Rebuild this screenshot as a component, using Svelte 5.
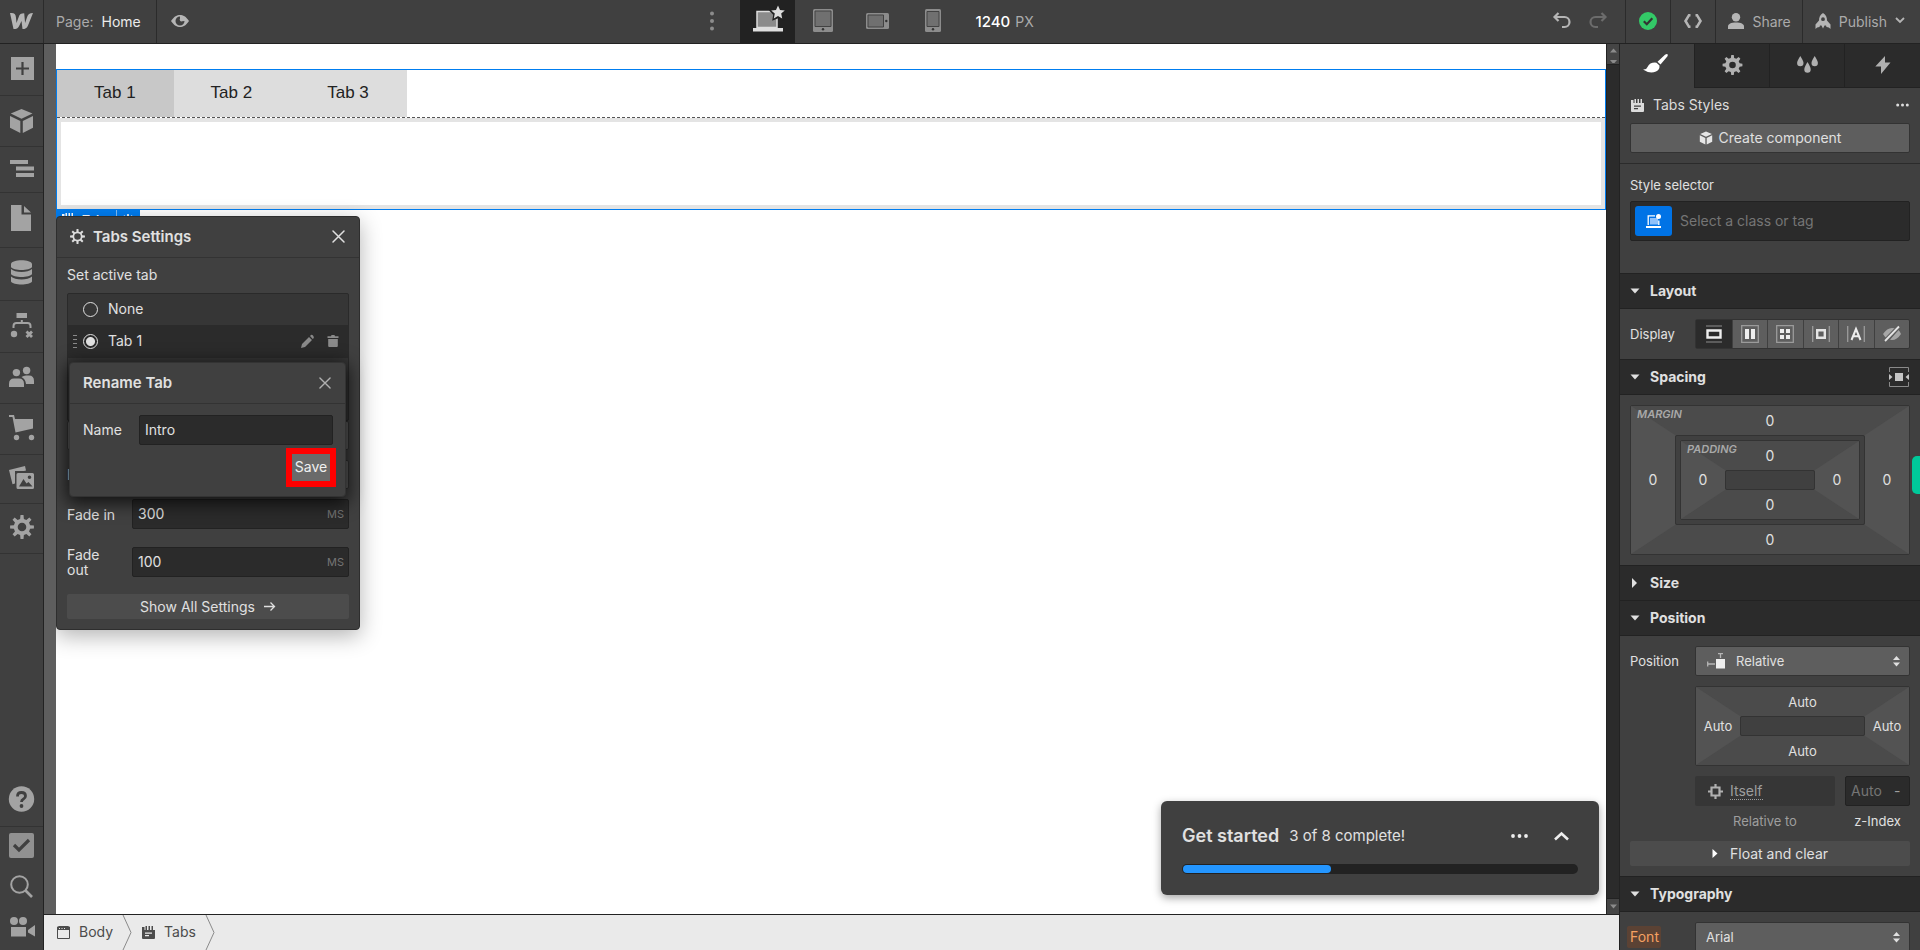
<script>
  // Outline of a cog wheel with a round hole, for use with fill-rule evenodd
  function gear(c, outer, inner, hole, teeth = 8) {
    const step = (Math.PI * 2) / teeth;
    const pts = [];
    for (let i = 0; i < teeth; i++) {
      const a = i * step - Math.PI / 2;
      for (const [offset, r] of [[-0.29, inner], [-0.16, outer], [0.16, outer], [0.29, inner]]) {
        const t = a + offset * step;
        pts.push((c + r * Math.cos(t)).toFixed(2) + ' ' + (c + r * Math.sin(t)).toFixed(2));
      }
    }
    return `M${pts.join('L')}ZM${c - hole} ${c}a${hole} ${hole} 0 1 0 ${hole * 2} 0a${hole} ${hole} 0 1 0 ${-hole * 2} 0Z`;
  }

  const tools = [
    { label: 'Add elements', icon: 'add', h: 24 },
    { label: 'Components', icon: 'cube', h: 23 },
    { label: 'Navigator', icon: 'nav', h: 18 },
    { label: 'Pages', icon: 'page', h: 27 },
    { label: 'CMS collections', icon: 'db', h: 25 },
    { label: 'Logic', icon: 'logic', h: 24 },
    { label: 'Users', icon: 'users', h: 23 },
    { label: 'Ecommerce', icon: 'cart', h: 23 },
    { label: 'Assets', icon: 'assets', h: 21 },
    { label: 'Settings', icon: 'gear', h: 22 }
  ];
  const displays = ['Block', 'Flex', 'Grid', 'Inline-block', 'Inline', 'None'];

  let activeTab = $state('tab1');
  let tabName = $state('Intro');
  let fadeIn = $state('300');
  let fadeOut = $state('100');
  let display = $state('Block');
  const done = 3;
  const total = 8;
</script>

{#snippet tabsIcon()}
  <svg width="13" height="13" viewBox="0 0 13 13"><path fill="currentColor" fill-rule="evenodd" d="M0 1h2.500v3h1V0H5v4h1.500V0H8v4h1.500V0H11v4h2v8q0 1-1 1H1q-1 0-1-1zM3 6.500v1.200h7V6.500zM3 9v1.200h4V9z" /></svg>
{/snippet}

{#snippet cube()}
  <path d="M12.500 1 23.500 5.600 12.500 10.800 1.800 5.600zM1 8l10.300 5v12L1 19.800zM24 8l-10.200 5v12L24 19.800z" />
{/snippet}

{#snippet cross(size)}
  <svg width={size} height={size} viewBox="0 0 13 13"><path d="M1 1 12 12M12 1 1 12" fill="none" stroke="currentColor" stroke-width="1.500" stroke-linecap="round" /></svg>
{/snippet}

{#snippet updown()}
  <svg class="updown" width="7" height="11" viewBox="0 0 7 11"><path fill="currentColor" d="M3.500 0 7 4H0zM0 6.500h7l-3.500 4z" /></svg>
{/snippet}

{#snippet section(title, open)}
  <button class="section" class:open aria-expanded={open}>
    <svg width="10" height="10" viewBox="0 0 10 10"><path fill="currentColor" d={open ? 'M.5 2.500h9L5 7.500z' : 'M2 0v10l5-5z'} /></svg>
    <span>{title}</span>
    {#if title === 'Spacing'}
      <svg class="end" width="20" height="20" viewBox="0 0 20 20"><path d="M.5 5V.5h19V5M.5 15v4.500h19V15" fill="none" stroke="#8a8a8a" /><path fill="#c4c4c4" d="M6 6h8v8H6zM0 7l3.500 3L0 13zM20 7l-3.500 3 3.500 3z" /></svg>
    {/if}
  </button>
{/snippet}

<div class="app">
  <header class="topbar">
    <button class="logo" aria-label="Menu">
      <svg width="23" height="16" viewBox="0 0 23 16"><path fill="#b5b5b5" d="M0 0h1.500C4.500 0 5.600 1.600 5.900 4l.6 6 2.300-6.200C9.400 1.300 11 .3 14.200.3l.9 9.700 2-6C18 1.200 19.500 0 23 0l-5 12.400C17 15 15.200 16 12.500 16l-1-8L9 13.200C8 15.300 6.500 16 3.500 16z" /></svg>
    </button>
    <button class="page"><span>Page:</span> Home</button>
    <button class="plain eye" aria-label="Preview">
      <svg width="18" height="12" viewBox="0 0 18 12"><path fill="#b5b5b5" fill-rule="evenodd" d="M0 6C3 1.500 6 0 9 0s6 1.500 9 6c-3 4.500-6 6-9 6S3 10.500 0 6zM9 1.500A4.500 4.500 0 1 0 13.500 6L11 6.300A1.800 1.800 0 0 1 9 3.600z" /></svg>
    </button>
    <div class="devices">
      <button class="plain dots" aria-label="Breakpoint options">
        <svg width="4" height="20" viewBox="0 0 4 20"><g fill="#8c8c8c"><circle cx="2" cy="2.500" r="2" /><circle cx="2" cy="10" r="2" /><circle cx="2" cy="17.500" r="2" /></g></svg>
      </button>
      <button class="plain device on" aria-label="Desktop">
        <svg width="32" height="28" viewBox="0 0 32 28"><path fill="#8b8b8b" stroke="#dedede" stroke-width="1.500" d="M5 6.500h20v16H5z" /><path fill="#dedede" d="M1 23h30v3.500H1z" /><path fill="#222" d="m26-1 3.200 5.200 6 1-4 4.500 1 6-6-2.400-6 2.400 1-6-4.400-4.500 6.200-1z" /><path fill="#dedede" d="m26 .5 2 4.400 4.800.5-3.600 3.200 1 4.900-4.200-2.400-4.200 2.400 1-4.900-3.600-3.200 4.800-.5z" /></svg>
      </button>
      <button class="plain device" aria-label="Tablet">
        <svg width="20" height="23" viewBox="0 0 20 23"><rect width="20" height="23" rx="1.500" fill="#8c8c8c" /><path fill="#707070" stroke="#424242" d="M2 2h16v15.500H2z" /><circle cx="10" cy="20.300" r="1.200" fill="#333" /></svg>
      </button>
      <button class="plain device" aria-label="Mobile landscape">
        <svg width="23" height="16" viewBox="0 0 23 16"><rect width="23" height="16" rx="1.500" fill="#8c8c8c" /><path fill="#707070" stroke="#424242" d="M2 2h15.500v12H2z" /><circle cx="20.300" cy="8" r="1.200" fill="#333" /></svg>
      </button>
      <button class="plain device" aria-label="Mobile portrait">
        <svg width="16" height="23" viewBox="0 0 16 23"><rect width="16" height="23" rx="1.500" fill="#8c8c8c" /><path fill="#707070" stroke="#424242" d="M2 2.500h12v15H2z" /><circle cx="8" cy="20.300" r="1.200" fill="#333" /></svg>
      </button>
      <button class="width"><b>1240</b> PX</button>
    </div>
    <div class="history">
      <button class="plain" aria-label="Undo">
        <svg width="18" height="17" viewBox="0 0 18 17"><path d="M5.500 1 1.500 5l4 4M2 5h9.500a4.800 4.800 0 0 1 0 10H9" fill="none" stroke="#b5b5b5" stroke-width="2.200" /></svg>
      </button>
      <button class="plain" aria-label="Redo" disabled>
        <svg width="18" height="17" viewBox="0 0 18 17"><path d="m12.500 1 4 4-4 4M16 5H6.500a4.800 4.800 0 0 0 0 10H9" fill="none" stroke="#6c6c6c" stroke-width="2.200" /></svg>
      </button>
    </div>
    <button class="action status" aria-label="All changes saved">
      <svg width="18" height="18" viewBox="0 0 18 18"><circle cx="9" cy="9" r="9" fill="#33c967" /><path d="m4.800 9.200 3 3 5.500-6" fill="none" stroke="#333" stroke-width="2.200" /></svg>
    </button>
    <button class="action" aria-label="Export code">
      <svg width="18" height="14" viewBox="0 0 18 14"><path d="M6.500 1.200H5L1.500 7 5 12.800h1.500M11.500 1.200H13L16.500 7 13 12.800h-1.500" fill="none" stroke="#b5b5b5" stroke-width="2.600" /></svg>
    </button>
    <button class="action">
      <svg width="16" height="16" viewBox="0 0 16 16"><circle cx="8" cy="4.300" r="4.200" fill="#b5b5b5" /><path fill="#b5b5b5" d="M0 16v-2.500C0 11 3 9.500 8 9.500s8 1.500 8 4V16z" /></svg>
      Share
    </button>
    <button class="action publish">
      <svg width="16" height="16" viewBox="0 0 16 16"><path fill="#b5b5b5" fill-rule="evenodd" d="M8 0c3 1.800 4 4.500 4 7.500l3.500 4V16c-1-1.300-2.200-2-4-2l-.5-1.500H9.500L8 15.500 6.500 12.500H5L4.500 14c-1.800 0-3 .7-4 2v-4.500l3.500-4C4 4.500 5 1.800 8 0zm0 4.300a1.900 1.900 0 1 0 0 3.800 1.900 1.900 0 0 0 0-3.800z" /></svg>
      Publish
      <svg class="caret" width="10" height="7" viewBox="0 0 10 7"><path d="m1 1 4 4 4-4" fill="none" stroke="#b5b5b5" stroke-width="1.800" /></svg>
    </button>
  </header>

  <nav class="sidebar" aria-label="Tools">
    {#each tools as tool}
      <button class="tool" aria-label={tool.label}>
        <svg width="26" height={tool.h} viewBox="0 0 26 {tool.h}" fill="#a3a3a3">
          {#if tool.icon === 'add'}
            <path fill-rule="evenodd" d="M2 1h23v23H2zM12.400 6v5.400H7v2.200h5.400V19h2.200v-5.400H20v-2.200h-5.400V6z" />
          {:else if tool.icon === 'cube'}
            {@render cube()}
          {:else if tool.icon === 'nav'}
            <path d="M1 1h18v4H1zM7 7.500h18v4H7zM7 14h18v4H7z" />
          {:else if tool.icon === 'page'}
            <path d="M2 0h10.500v9.500H22V26H2zM15 1v6.500h7z" />
          {:else if tool.icon === 'db'}
            <path d="M2 4c1-5 20-5 21 0v3c-2 4-19 4-21 0zM2 9c4 4 17 4 21 0v5c-2 4-19 4-21 0zM2 16.500c4 4 17 4 21 0v5c-2 4-19 4-21 0z" />
          {:else if tool.icon === 'logic'}
            <path d="M7.500 0H18v5H7.500z" /><circle cx="5" cy="21" r="3.200" />
            <path d="M4.500 15v-2q0-3 3-3h11q3 0 3 3v2M12.800 7v3" fill="none" stroke="#a3a3a3" stroke-width="2" />
            <path d="m17.500 18.500 5.500 5.500M23 18.500 17.500 24" stroke="#a3a3a3" stroke-width="2.800" />
          {:else if tool.icon === 'users'}
            <circle cx="7.400" cy="7.600" r="3.700" /><circle cx="17.600" cy="5.500" r="3.700" />
            <path d="M0 22v-3q0-5.500 5-5.500h5q5 0 5 5.500v3zM12.500 12q2-1.500 4.500-1.500h3q5 0 5 5.500v3h-8q-.5-5-4.500-7z" />
          {:else if tool.icon === 'cart'}
            <path d="M0-1h5l1 4h18v9.500L6.500 16.500l-3-15.500H0z" /><circle cx="7.500" cy="21.500" r="2.700" /><circle cx="22.500" cy="21.500" r="2.700" />
          {:else if tool.icon === 'assets'}
            <path d="M0 3 16-1l1 4.500-2 .5H6v12.500l-2.500.8z" />
            <path fill-rule="evenodd" d="M9 6h14.500q1.500 0 1.500 1.500v13q0 1.500-1.500 1.500H9q-1.500 0-1.500-1.500v-13Q7.500 6 9 6zM10 19.500h13.500L19.500 15l-2 1.500-3-4.500zM20.500 8.500a1.800 1.800 0 1 0 0 3.600 1.800 1.800 0 0 0 0-3.600z" />
          {:else}
            <path fill-rule="evenodd" transform="translate(1 -1)" d={gear(12, 12, 8.300, 4.300)} />
          {/if}
        </svg>
      </button>
    {/each}
    <button class="tool help" aria-label="Help">
      <svg width="26" height="24" viewBox="0 0 26 24"><circle cx="12.500" cy="12" r="12.700" fill="#a3a3a3" /><path d="M8.500 9.500q0-4 4-4t4 3.500q0 2-2 3t-2 3" fill="none" stroke="#404040" stroke-width="2.800" /><circle cx="12.500" cy="19" r="1.900" fill="#404040" /></svg>
    </button>
    <button class="small" aria-label="Audit">
      <svg width="25" height="25" viewBox="0 0 25 25"><rect width="25" height="25" rx="2" fill="#919191" /><path d="m5 12 5 5L20 7" fill="none" stroke="#404040" stroke-width="3.200" /></svg>
    </button>
    <button class="small" aria-label="Search">
      <svg width="23" height="23" viewBox="0 0 23 23"><circle cx="9.500" cy="9.500" r="8.300" fill="none" stroke="#a3a3a3" stroke-width="2" /><path d="m15.500 15.500 6.500 6.500" stroke="#a3a3a3" stroke-width="2.600" /></svg>
    </button>
    <button class="small" aria-label="Video tutorials">
      <svg width="25" height="20" viewBox="0 0 25 20" fill="#a3a3a3"><circle cx="5" cy="4" r="4" /><circle cx="14" cy="4" r="4" /><path d="M2 10h15v9.500H2zM19 13l7-5v11.500l-7-4z" /></svg>
    </button>
  </nav>

  <main class="stage">
    <div class="canvas">
      <div class="tabs-block">
        <div class="tab-menu">
          <a class="current" href="#tab-1">Tab 1</a>
          <a href="#tab-2">Tab 2</a>
          <a href="#tab-3">Tab 3</a>
        </div>
        <div class="tab-content"></div>
      </div>

      <div class="tag">{@render tabsIcon()}<span>Tabs</span><i></i><svg width="12" height="12" viewBox="0 0 12 12"><path fill="#fff" fill-rule="evenodd" d={gear(6, 6, 4.200, 2)} /></svg></div>

      <section class="dialog settings">
        <header>
          <svg width="15" height="15" viewBox="0 0 15 15"><path fill="#dcdcdc" fill-rule="evenodd" d={gear(7.500, 7.500, 5, 3.300)} /></svg>
          <h2>Tabs Settings</h2>
          <button class="plain" aria-label="Close settings">{@render cross(13)}</button>
        </header>
        <div class="body">
          <p>Set active tab</p>
          <div class="choices">
            <label><span class="grip"></span><input type="radio" name="tab" value="none" bind:group={activeTab} />None</label>
            <label class="row-on">
              <span class="grip shown"></span>
              <input type="radio" name="tab" value="tab1" bind:group={activeTab} />Tab 1
              <svg class="edit" width="13" height="13" viewBox="0 0 13 13"><path fill="#8a8a8a" d="M0 13l1-4 7-7 3 3-7 7zM9 1l1-1q1-.5 2 .5T12.800 3l-1 1z" /></svg>
              <svg width="12" height="12" viewBox="0 0 12 12"><path fill="#8a8a8a" d="M.5 1.200h3.500L4.500 0h3L8 1.200h3.500V3H.5zM1.200 4h9.600v7q0 1-1 1H2.200q-1 0-1-1z" /></svg>
            </label>
            <div class="choice-rest"></div>
          </div>
          <button class="field add-tab" aria-label="Add tab"></button>
          <div class="field-row"><label for="easing">E</label><button id="easing" class="field" aria-label="Easing"></button></div>
          <div class="field-row">
            <label for="fade-in">Fade in</label>
            <div class="input"><input id="fade-in" bind:value={fadeIn} /><span>MS</span></div>
          </div>
          <div class="field-row tall">
            <label for="fade-out">Fade out</label>
            <div class="input"><input id="fade-out" bind:value={fadeOut} /><span>MS</span></div>
          </div>
          <button class="wide">Show All Settings
            <svg width="12" height="11" viewBox="0 0 12 11"><path d="M0 5.500h10M6.500 1.500l4 4-4 4" fill="none" stroke="currentColor" stroke-width="1.300" /></svg>
          </button>
        </div>
      </section>

      <section class="dialog rename">
        <header>
          <h2>Rename Tab</h2>
          <button class="plain" aria-label="Close rename">{@render cross(12)}</button>
        </header>
        <div class="rename-row">
          <label for="tab-name">Name</label>
          <input id="tab-name" bind:value={tabName} />
        </div>
        <button class="save">Save</button>
      </section>

      <aside class="started">
        <div class="started-head">
          <h2>Get started</h2>
          <span>{done} of {total} complete!</span>
          <button class="plain" aria-label="More"><svg width="17" height="4" viewBox="0 0 17 4"><g fill="#eee"><circle cx="2" cy="2" r="1.900" /><circle cx="8.500" cy="2" r="1.900" /><circle cx="15" cy="2" r="1.900" /></g></svg></button>
          <button class="plain" aria-label="Expand"><svg width="15" height="10" viewBox="0 0 15 10"><path d="m1 8.500 6.500-6 6.500 6" fill="none" stroke="#eee" stroke-width="2.600" /></svg></button>
        </div>
        <div class="bar"><div style="width: {(done / total) * 100}%"></div></div>
      </aside>
    </div>
    <div class="scroll">
      <div class="arrows"><svg width="7" height="5" viewBox="0 0 7 5"><path fill="#8b8b8b" d="M0 4.500h7L3.500.5z" /></svg><svg width="7" height="4" viewBox="0 0 7 4"><path fill="#8b8b8b" d="M0 0h7L4.500 3h-2z" /></svg></div>
      <div class="arrows down"><svg width="7" height="5" viewBox="0 0 7 5"><path fill="#8b8b8b" d="M0 .5h7L3.500 4.500z" /></svg></div>
    </div>
    <footer class="crumbs">
      <a href="#body"><svg width="13" height="13" viewBox="0 0 13 13"><path fill="none" stroke="#4c4c4c" d="M.5 1.500q0-1 1-1h10q1 0 1 1v11H.5z" /><path fill="#4c4c4c" d="M0 1h13v3H0z" /><path fill="#eaeaea" d="M2 2h1v1H2zM4.500 2h1v1h-1zM7 2h1v1H7z" /></svg>Body</a>
      <svg class="sep" width="10" height="35" viewBox="0 0 10 35"><path d="M1 0 9 17.500 1 35" fill="none" stroke="#8a8a8a" /></svg>
      <a href="#tabs">{@render tabsIcon()}Tabs</a>
      <svg class="sep" width="10" height="35" viewBox="0 0 10 35"><path d="M1 0 9 17.500 1 35" fill="none" stroke="#8a8a8a" /></svg>
    </footer>
  </main>

  <aside class="panel">
    <div class="panel-tabs">
      <button class="on" aria-label="Style"><svg width="25" height="19" viewBox="0 0 25 19" fill="#fff"><path d="M24 0q1.500.5.5 2.200l-7 8.300-3-2.800 7.500-7Q23 0 24 0zM13.500 8.700l3 2.800q.3 4.500-3.500 6-6.500 2.500-13-2 3.500.3 4.500-2.500 2.500-5 9-4.300z" /></svg></button>
      <button aria-label="Element settings"><svg width="21" height="20" viewBox="0 0 20 20"><path fill="#b0b0b0" fill-rule="evenodd" d={gear(10, 10, 7.300, 3.300)} /></svg></button>
      <button aria-label="Style manager"><svg width="21" height="17" viewBox="0 0 21 17" fill="#b0b0b0"><path d="M3.300 0q3.200 5 3.200 7a3.200 3.200 0 0 1-6.400 0q0-2 3.200-7zM10.500 6q3.200 5 3.200 7.500a3.200 3.200 0 0 1-6.400 0q0-2.500 3.200-7.500zM17.700 0q3.200 5 3.200 7a3.200 3.200 0 0 1-6.400 0q0-2 3.200-7z" /></svg></button>
      <button aria-label="Interactions"><svg width="16" height="18" viewBox="0 0 16 18"><path fill="#b0b0b0" d="M10 0v6.500h5.500L6 18v-7.500H.3z" /></svg></button>
    </div>
    <div class="intro">
      <div class="styles-head">
        {@render tabsIcon()}<h2>Tabs Styles</h2>
        <button class="plain" aria-label="More options"><svg width="13" height="4" viewBox="0 0 13 4"><g fill="#ddd"><circle cx="1.700" cy="2" r="1.500" /><circle cx="6.500" cy="2" r="1.500" /><circle cx="11.300" cy="2" r="1.500" /></g></svg></button>
      </div>
      <button class="create"><svg width="14" height="14" viewBox="0 0 25 26" fill="#e6e6e6">{@render cube()}</svg>Create component</button>
    </div>
    <div class="selector">
      <label for="selector">Style selector</label>
      <div class="selector-box">
        <button class="state" aria-label="Inheritance"><svg width="16" height="15" viewBox="0 0 16 15"><path fill="#8fc1fa" d="M4 4h8v6.500H4z" /><path d="M9 1.800H2.200V11M12.800 6.500V11" fill="none" stroke="#fff" stroke-width="1.300" /><path fill="#fff" d="M0 12h15v2H0z" /><circle cx="12.500" cy="2.500" r="2.500" fill="#fff" /></svg></button>
        <input id="selector" placeholder="Select a class or tag" />
      </div>
    </div>

    {@render section('Layout', true)}
    <div class="group row">
      <span class="label">Display</span>
      <div class="segments">
        {#each displays as d, i}
          <button class:picked={display === d} aria-label={d} aria-pressed={display === d} onclick={() => (display = d)}>
            <svg width="18" height="18" viewBox="0 0 18 18">
              {#if i === 0}<path d="M1 1h16M1 17h16" stroke="#8d8d8d" stroke-width="1.200" /><path d="M2.500 5.500h13v7h-13z" fill="none" stroke="#eee" stroke-width="2.400" />
              {:else if i === 1}<path d="M.7.7h16.600v16.600H.7z" fill="none" stroke="#9b9b9b" stroke-width="1.300" /><path fill="#eee" d="M4 4h4v10H4zM10 4h4v10h-4z" />
              {:else if i === 2}<path d="M.7.7h16.600v16.600H.7z" fill="none" stroke="#9b9b9b" stroke-width="1.300" /><path fill="#eee" d="M4 4h4v4H4zM10 4h4v4h-4zM4 10h4v4H4zM10 10h4v4h-4z" />
              {:else if i === 3}<path d="M.7 1v16M17.300 1v16" stroke="#9b9b9b" stroke-width="1.300" /><path d="M5.200 5.200h7.600v7.600H5.200z" fill="none" stroke="#e4e4e4" stroke-width="2.400" />
              {:else if i === 4}<path d="M.7 1v16M17.300 1v16" stroke="#9b9b9b" stroke-width="1.300" /><path d="M4.500 15 9 4l4.500 11M6 11.300h6" fill="none" stroke="#eee" stroke-width="2" />
              {:else}<path fill="#a6a6a6" d="M0 9q4-6 9-6 2.500 0 4 1L4.500 14Q2 12.500 0 9zM18 9q-4 6-9 6l-2-.3L15.500 5Q17 6.500 18 9z" /><path d="M2 16 16 1.500" stroke="#5e5e5e" stroke-width="4" /><path d="M2 16 16 1.500" stroke="#e4e4e4" stroke-width="1.800" />{/if}
            </svg>
          </button>
        {/each}
      </div>
    </div>

    {@render section('Spacing', true)}
    <div class="group">
      <div class="box margin">
        <button class="l">0</button><button class="r">0</button>
        <button class="t">0</button><button class="b">0</button>
        <span class="name">MARGIN</span>
        <div class="core">
          <div class="box padding">
            <button class="l">0</button><button class="r">0</button>
            <button class="t">0</button><button class="b">0</button>
            <span class="name">PADDING</span>
            <div class="core"></div>
          </div>
        </div>
      </div>
    </div>

    {@render section('Size', false)}
    {@render section('Position', true)}
    <div class="group">
      <div class="row">
        <label class="label" for="position">Position</label>
        <div class="select with-icon">
          <select id="position"><option>Relative</option></select>
          <svg class="lead" width="18" height="16" viewBox="0 0 18 16"><path d="M11 .7h5M13.500 1v4M.7 8.500v5M1 11h7" fill="none" stroke="#b5b5b5" stroke-width="1.300" /><path fill="#eee" d="M9 6h9v9.500H9z" /></svg>
          {@render updown()}
        </div>
      </div>
      <div class="row indent">
        <div class="box offsets">
          <button class="l">Auto</button><button class="r">Auto</button>
          <button class="t">Auto</button><button class="b">Auto</button>
          <div class="core"></div>
        </div>
      </div>
      <div class="row indent pair">
        <div class="rel">
          <button><svg width="15" height="15" viewBox="0 0 15 15"><path d="M3.500 3.500h8v8h-8zM7.500 0v3M7.500 12v3M0 7.500h3M12 7.500h3" fill="none" stroke="#b0b0b0" stroke-width="2.200" /></svg><u>Itself</u></button>
          <span>Relative to</span>
        </div>
        <div class="zindex">
          <div><input id="z" placeholder="Auto" /><span>-</span></div>
          <label for="z">z-Index</label>
        </div>
      </div>
      <button class="wide float"><svg width="6" height="9" viewBox="0 0 6 9"><path fill="#fff" d="M.5 0v9l5-4.500z" /></svg>Float and clear</button>
    </div>

    {@render section('Typography', true)}
    <div class="group">
      <div class="row">
        <label class="label font" for="font"><span>Font</span></label>
        <div class="select"><select id="font"><option>Arial</option></select>{@render updown()}</div>
      </div>
    </div>
    <button class="feedback" aria-label="Feedback"></button>
  </aside>
</div>

<style>
  :global(body) { margin: 0; overflow: hidden; }
  .app, .app * { box-sizing: border-box; }
  .app {
    display: grid;
    grid-template: 44px minmax(0, 1fr) / 44px minmax(0, 1fr) 301px;
    height: 100vh;
    background: #404040;
    color: #e0e0e0;
    font: 14px/16px Inter, sans-serif;
  }
  button, input, select { font: inherit; color: inherit; margin: 0; }
  button { border: 0; padding: 0; background: none; cursor: pointer; }
  h2, p { margin: 0; font: inherit; }
  a { color: inherit; text-decoration: none; }
  svg { display: block; flex: none; overflow: visible; }
  .plain { display: grid; place-items: center; }

  .topbar { grid-column: 1 / -1; display: flex; border-bottom: 1px solid #222; color: #ababab; }
  .logo { display: grid; place-items: center; width: 44px; padding: 0 0 2px; border-right: 1px solid #2b2b2b; }
  .page { padding: 0 15px 0 12px; border-right: 1px solid #2b2b2b; color: #ebebeb; }
  .page span { color: #ababab; margin-right: 4px; }
  .eye { padding: 0 14px 2px 14px; }
  .devices { flex: 1; display: flex; justify-content: center; padding-right: 16px; }
  .dots { width: 56px; padding-bottom: 2px; }
  .device { width: 55px; padding-bottom: 2px; }
  .device.on { background: #222; padding-bottom: 6px; }
  .width { padding: 0 8px 0 15px; }
  .width b { font-size: 15px; font-weight: 500; color: #fff; margin-right: 1px; }
  .history { display: flex; gap: 18px; padding: 0 18px 2px 14px; }
  .action { display: flex; align-items: center; gap: 8px; padding: 0 11px 0 12px; border-left: 1px solid #2b2b2b; }
  .action:not(:has(+ .publish)):not(.publish) { padding: 0 13px; }
  .status svg, .action svg { margin-bottom: 2px; }
  .publish { padding-right: 15px; }

  .sidebar { display: flex; flex-direction: column; border-right: 1px solid #222; }
  .tool { display: flex; padding: 12px 0 15px 9px; border-bottom: 1px solid #333; }
  .help { margin-top: auto; }
  .small { display: grid; place-items: center; height: 41px; padding-bottom: 5px; }

  .stage { display: grid; grid-template: minmax(0, 1fr) 36px / minmax(0, 1fr) 13px; }
  .canvas { position: relative; padding-top: 25px; border-left: 12px solid #5e5e5e; background: #fff; overflow: hidden; }
  .tabs-block { border: 1px solid #007df0; }
  .tab-menu { display: flex; border-bottom: 1px dashed #555; font: 17px/24px "Liberation Sans", Arial, sans-serif; color: #222; }
  .tab-menu a { padding: 11px 38px 12px 37px; background: #ddd; }
  .tab-menu .current { background: #c8c8c8; }
  .tab-content { height: 91px; border: 4px solid #e4e4e4; }
  .tag { display: flex; align-items: center; width: 84px; height: 19px; padding: 0 6px; background: #007df0; color: #fff; font-size: 12px; font-weight: 600; }
  .tag span { flex: 1; padding-left: 7px; }
  .tag i { width: 1px; height: 19px; margin-right: 5px; background: #80bef7; }

  .dialog { position: absolute; background: #404040; border: 1px solid #2e2e2e; border-radius: 4px; }
  .dialog header { display: flex; align-items: center; height: 41px; padding: 0 14px 1px 13px; border-bottom: 1px solid #333; }
  .dialog h2 { flex: 1; font-size: 15px; font-weight: 600; }
  .settings { top: 172px; left: 0; width: 304px; box-shadow: 0 6px 22px rgba(0, 0, 0, .3); }
  .settings header { gap: 8px; }
  .body { padding: 9px 10px 10px; }
  .choices { margin-top: 10px; border: 1px solid #2a2a2a; border-radius: 2px; background: #363636; }
  .choices label { display: flex; align-items: center; height: 31px; padding: 0 9px 1px 0; }
  .choices .row-on { height: 33px; background: #2b2b2b; }
  .grip { width: 4px; height: 13px; margin: 0 6px 0 5px; }
  .shown { background: repeating-linear-gradient(#8a8a8a 0 1px, transparent 1px 4px); }
  .choices input { appearance: none; width: 15px; height: 15px; margin: 0 10px 0 0; border: 1px solid #e0e0e0; border-radius: 50%; }
  .choices input:checked { background: radial-gradient(#e0e0e0 0 4px, transparent 5px); }
  .edit { margin: 0 13px 0 auto; }
  .choice-rest { height: 62px; }
  .field { width: 100%; height: 29px; background: #5e5e5e; border: 1px solid #333; border-radius: 2px; }
  .add-tab { display: block; }
  .field-row { display: grid; grid-template-columns: 50px minmax(0, 1fr); column-gap: 15px; align-items: center; margin-top: 10px; }
  .field-row label { line-height: 15px; }
  .field-row + .field-row.tall { margin-top: 18px; }
  .input { display: flex; align-items: center; height: 30px; border: 1px solid #222; border-radius: 2px; background: #2b2b2b; }
  .input input { flex: 1; min-width: 0; border: 0; padding: 0 5px; background: none; outline: 0; }
  .input span { padding-right: 4px; color: #757575; font-size: 11px; }
  .wide { display: flex; justify-content: center; align-items: center; gap: 9px; width: 100%; height: 25px; border-radius: 2px; background: #4c4c4c; }
  .body .wide { margin-top: 17px; }

  .rename { top: 318px; left: 13px; width: 277px; border-color: #333; padding-bottom: 9px; box-shadow: 0 4px 18px 2px rgba(0, 0, 0, .75); }
  .rename header button { color: #b0b0b0; }
  .rename-row { display: flex; align-items: center; justify-content: space-between; padding: 11px 12px 3px 13px; }
  .rename-row input { width: 194px; height: 30px; padding: 0 5px 2px; border: 1px solid #222; border-radius: 2px; background: #2b2b2b; }
  .save { display: block; margin: 0 9px 0 auto; width: 50px; height: 39px; padding-bottom: 1px; border: 6px solid #f00; background: #6a6a6a; color: #f0f0f0; }

  .started { position: absolute; right: 7px; bottom: 19px; width: 438px; padding: 24px 21px 21px; border-radius: 6px; background: #404040; box-shadow: 0 3px 8px rgba(0, 0, 0, .35); }
  .started-head { display: flex; align-items: center; height: 22px; }
  .started h2 { font-size: 18px; font-weight: 600; margin-right: 10px; }
  .started-head span { font-size: 15px; flex: 1; }
  .started-head button { margin-right: 26px; }
  .started-head button:last-child { margin-right: 9px; }
  .bar { height: 10px; margin-top: 17px; padding: 1px; border-radius: 5px; background: #222; }
  .bar div { height: 8px; border-radius: 4px; background: #2496ff; }

  .scroll { display: flex; flex-direction: column; justify-content: space-between; border-left: 1px solid #222; background: #2b2b2b; }
  .arrows { display: flex; flex-direction: column; justify-content: space-between; align-items: center; height: 21px; padding-top: 4px; border-bottom: 1px solid #222; background: #454545; }
  .down { height: 16px; padding-top: 5px; border-top: 1px solid #222; border-bottom: 0; }
  .crumbs { grid-column: 1 / -1; display: flex; align-items: center; border-top: 1px solid #222; background: #eaeaea; color: #4c4c4c; }
  .crumbs a { display: flex; align-items: center; gap: 9px; padding: 0 9px 1px 13px; }
  .crumbs .sep + a { padding-left: 10px; }

  .panel { position: relative; border-left: 1px solid #222; overflow: hidden; }
  .panel-tabs { display: grid; grid-template-columns: 74fr 75fr 75fr 76fr; height: 44px; }
  .panel-tabs button { display: grid; place-items: center; padding-bottom: 2px; background: #2b2b2b; border: solid #222; border-width: 0 0 1px 1px; }
  .panel-tabs .on { background: none; border-width: 0; padding: 0 4px 6px 0; }
  .intro { padding: 9px 10px 10px; border-bottom: 1px solid #2b2b2b; }
  .styles-head { display: flex; align-items: center; gap: 9px; height: 16px; padding: 0 1px; color: #dcdcdc; }
  .styles-head h2 { flex: 1; }
  .create { display: flex; justify-content: center; align-items: center; gap: 6px; width: 100%; height: 30px; margin-top: 10px; border: 1px solid #333; border-radius: 2px; background: #5e5e5e; }
  .selector { padding: 13px 10px 32px; }
  .selector label { font-size: 13px; }
  .selector-box { display: flex; margin-top: 8px; padding: 4px; border: 1px solid #222; border-radius: 2px; background: #2b2b2b; }
  .selector-box input { flex: 1; min-width: 0; padding: 0 8px; border: 0; background: none; outline: 0; }
  .selector-box input::placeholder { color: #757575; }
  .state { display: grid; place-items: center; width: 37px; height: 30px; border-radius: 3px; background: #0073e6; }

  .section { display: flex; align-items: center; gap: 10px; width: 100%; height: 35px; padding: 0 11px 0 10px; border-top: 1px solid #222; background: #2b2b2b; font-weight: 700; }
  .section.open { height: 36px; border-bottom: 1px solid #222; }
  .end { margin-left: auto; }
  .group { padding: 10px; font-size: 13px; }
  .row { display: flex; align-items: center; }
  .label { width: 65px; flex: none; }
  .segments { flex: 1; display: grid; grid-template-columns: repeat(6, 1fr); border: 1px solid #333; border-radius: 2px; background: #5e5e5e; }
  .segments button { display: grid; place-items: center; height: 28px; }
  .segments button + button { border-left: 1px solid #404040; }
  .segments .picked { background: #2b2b2b; }

  .box { display: grid; grid-template: 29px minmax(0, 1fr) 29px / 44px minmax(0, 1fr) 44px; width: 100%; border: 1px solid #333; border-radius: 2px; background: #4b4b4b; }
  .box > .l, .box > .r { grid-row: 1 / -1; background: #535353; }
  .box > .l { grid-column: 1; clip-path: polygon(0 0, 100% 29px, 100% calc(100% - 29px), 0 100%); }
  .box > .r { grid-column: 3; clip-path: polygon(100% 0, 0 29px, 0 calc(100% - 29px), 100% 100%); }
  .box > .t { grid-area: 1 / 2; }
  .box > .b { grid-area: 3 / 2; }
  .box > .name { z-index: 1; grid-area: 1 / 1 / 2 / 3; justify-self: start; padding: 0 6px; color: #a8a8a8; font-size: 11px; font-weight: 600; font-style: italic; }
  .core { grid-area: 2 / 2; border: 1px solid #333; border-radius: 2px; background: #404040; }
  .margin { height: 150px; font-size: 14px; }
  .margin > .core { padding: 4px; }
  .padding { height: 80px; }
  .offsets { height: 80px; }
  .indent { padding-left: 65px; margin-top: 10px; }

  .select { flex: 1; display: grid; align-items: center; }
  .select > * { grid-area: 1 / 1; }
  .select select { appearance: none; width: 100%; height: 30px; padding: 0 10px; border: 1px solid #333; border-radius: 2px; background: #5e5e5e; outline: 0; }
  .with-icon select { padding-left: 40px; }
  .select svg { pointer-events: none; }
  .lead { margin-left: 12px; }
  .updown { justify-self: end; margin-right: 10px; }
  .pair { gap: 10px; align-items: stretch; }
  .rel { flex: 1; color: #9e9e9e; text-align: center; }
  .rel span { display: block; margin-top: 7px; }
  .rel button { display: flex; align-items: center; gap: 7px; width: 100%; height: 30px; padding-left: 13px; border-radius: 2px; background: #363636; font-size: 14px; }
  .rel u { text-decoration: none; border-bottom: 1px dotted #9e9e9e; }
  .zindex { width: 65px; text-align: center; }
  .zindex div { display: flex; align-items: center; height: 30px; border: 1px solid #222; border-radius: 2px; background: #2b2b2b; color: #9e9e9e; font-size: 14px; }
  .zindex input { width: 48px; padding: 0 0 0 5px; border: 0; background: none; outline: 0; }
  .zindex input::placeholder { color: #757575; }
  .zindex label { display: block; margin-top: 7px; }
  .float { margin-top: 12px; gap: 12px; font-size: 14px; }
  .font span { padding: 2px 2px 3px 3px; margin-left: -3px; border-radius: 2px; background: #5b4234; color: #f5a162; font-size: 14px; }
  .feedback { position: absolute; right: 0; top: 412px; width: 8px; height: 38px; border-radius: 5px 0 0 5px; background: #00c99a; }
</style>
